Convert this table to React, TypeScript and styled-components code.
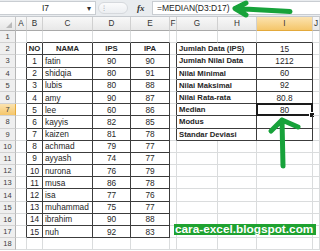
import React from 'react';
import styled, {createGlobalStyle} from 'styled-components';

const GRID = '#dadcdd';
const LINE = '#3c3c3c';

const COLS = ['A', 'B', 'C', 'D', 'E', 'F', 'G', 'H', 'I', 'J'];
const COL_WIDTHS = [16, 11, 16, 50, 38, 39, 7, 41, 39, 56, 7];
const ROWS = 18;

const students: [string, number, number][] = [
  ['fatin', 90, 90],
  ['shidqia', 80, 91],
  ['lubis', 80, 88],
  ['amy', 90, 87],
  ['lee', 60, 86],
  ['kayyis', 82, 85],
  ['kaizen', 81, 78],
  ['achmad', 79, 77],
  ['ayyash', 74, 77],
  ['nurona', 76, 79],
  ['musa', 86, 78],
  ['isa', 77, 76],
  ['muhammad', 75, 77],
  ['ibrahim', 90, 88],
  ['nuh', 92, 83],
];

const stats: [string, string][] = [
  ['Jumlah Data (IPS)', '15'],
  ['Jumlah Nilai Data', '1212'],
  ['Nilai Minimal', '60'],
  ['Nilai Maksimal', '92'],
  ['Nilai Rata-rata', '80.8'],
  ['Median', '80'],
  ['Modus', ''],
  ['Standar Deviasi', ''],
];

const GlobalStyle = createGlobalStyle`
  html, body {
    margin: 0;
    padding: 0;
    background: #ffffff;
  }
  body {
    font-family: "Liberation Sans", Arial, sans-serif;
  }
`;

type CellSpec = {
  text?: string | number;
  right?: string;
  bottom?: string;
  align?: 'left' | 'center';
  bold?: boolean;
  span?: number;
  selected?: boolean;
};

// works out what goes in a sheet cell (row r, column index c: 0 = A)
const specFor = (r: number, c: number): CellSpec | null => {
  const spec: CellSpec = {right: GRID, bottom: GRID, align: 'center'};

  // data table B2:E17
  if (r >= 2 && r <= 17 && c >= 1 && c <= 4) {
    spec.right = LINE;
    spec.bottom = LINE;
    if (r === 2) {
      spec.text = ['NO', 'NAMA', 'IPS', 'IPA'][c - 1];
      spec.bold = true;
    } else {
      const s = students[r - 3];
      spec.text = [r - 2, s[0], s[1], s[2]][c - 1];
      if (c === 2) spec.align = 'left';
    }
  }
  if (c === 0 && r >= 2 && r <= 17) spec.right = LINE;
  if (r === 1 && c >= 1 && c <= 4) spec.bottom = LINE;

  // stats table G2:I9
  if (r >= 2 && r <= 9 && c >= 6 && c <= 8) {
    if (c === 7) return null;
    spec.right = LINE;
    spec.bottom = LINE;
    const s = stats[r - 2];
    if (c === 6) {
      spec.text = s[0];
      spec.bold = true;
      spec.align = 'left';
      spec.span = 2;
    } else {
      spec.text = s[1];
      spec.selected = r === 7;
    }
  }
  if (c === 5 && r >= 2 && r <= 9) spec.right = LINE;
  if (r === 1 && c >= 6 && c <= 8) spec.bottom = LINE;

  return spec;
};

const App = () => {
  const cells: React.ReactNode[] = [];
  for (let r = 1; r <= ROWS; r++) {
    cells.push(
      <RowHead key={`h${r}`} $active={r === 7}>
        {r}
      </RowHead>
    );
    COLS.forEach((_, c) => {
      const s = specFor(r, c);
      if (!s) return;
      cells.push(
        <Cell
          key={`${r}-${c}`}
          $right={s.right}
          $bottom={s.bottom}
          $align={s.align}
          $bold={s.bold}
          $span={s.span}
          $selected={s.selected}
        >
          {s.text}
        </Cell>
      );
    });
  }

  return (
    <Wrapper>
      <GlobalStyle />
      <FormulaBar>
        <NameBox>
          <NameText>I7</NameText>
          <DropArrow>▾</DropArrow>
        </NameBox>
        <Splitter>
          <Pill>⁝</Pill>
          <FxLabel>fx</FxLabel>
        </Splitter>
        <FormulaInput>=MEDIAN(D3:D17)</FormulaInput>
      </FormulaBar>

      <Sheet>
        <Corner>
          <svg width="6" height="6" viewBox="0 0 6 6">
            <polygon points="6,0 6,6 0,6" fill="#b9b9b9" />
          </svg>
        </Corner>
        {COLS.map(col => (
          <ColHead key={col} $active={col === 'I'}>
            {col}
          </ColHead>
        ))}
        {cells}
      </Sheet>

      <LeftArrow width="64" height="18" viewBox="0 0 64 18">
        <path
          d="M14 3 L3 8.5 L14 15 M3 8.5 L58 11.5"
          fill="none"
          stroke="#17a23a"
          strokeWidth="5"
          strokeLinecap="round"
          strokeLinejoin="round"
        />
      </LeftArrow>

      <UpArrow width="38" height="56" viewBox="0 0 38 56">
        <path
          d="M5 15 L16 4 L32 11 M16 4 L17 50"
          fill="none"
          stroke="#17a23a"
          strokeWidth="5"
          strokeLinecap="round"
          strokeLinejoin="round"
        />
      </UpArrow>

      <Watermark>cara-excel.blogspot.com</Watermark>
    </Wrapper>
  );
};

export default App;

const Wrapper = styled.div`
  position: relative;
  width: 320px;
  height: 251px;
  overflow: hidden;
  background: #ffffff;
`;

const FormulaBar = styled.div`
  display: flex;
  align-items: stretch;
  height: 17px;
  box-sizing: border-box;
  background: #e9ecef;
  border-bottom: 1px solid #c5c9ce;
  font-size: 8.5px;
  color: #222;
`;

const NameBox = styled.div`
  width: 96px;
  display: flex;
  align-items: center;
  box-sizing: border-box;
  margin: 1px 0;
  background: #ffffff;
  border: 1px solid #c9cdd2;
  border-left: none;
`;

const NameText = styled.span`
  flex: 1;
  text-align: center;
  padding-left: 4px;
`;

const DropArrow = styled.span`
  width: 8px;
  font-size: 8px;
  color: #333;
`;

const Splitter = styled.div`
  width: 54px;
  display: flex;
  align-items: center;
  padding-left: 2px;
`;

const Pill = styled.div`
  width: 30px;
  height: 12px;
  border-radius: 6px;
  border: 1px solid #d6d9dd;
  background: linear-gradient(#fbfbfc, #eceef1);
  color: #a5aab0;
  font-size: 8px;
  line-height: 12px;
  padding-left: 4px;
  box-sizing: border-box;
`;

const FxLabel = styled.span`
  margin-left: 9px;
  font-family: "Liberation Serif", serif;
  font-style: italic;
  font-weight: bold;
  font-size: 9px;
  color: #333;
`;

const FormulaInput = styled.div`
  flex: 1;
  display: flex;
  align-items: center;
  padding-left: 4px;
  margin: 1px 0;
  background: #ffffff;
  border: 1px solid #c9cdd2;
  border-right: none;
`;

const Sheet = styled.div`
  display: grid;
  grid-template-columns: ${COL_WIDTHS.map(w => `${w}px`).join(' ')};
  grid-template-rows: 14px repeat(${ROWS}, 12.2px);
`;

const Corner = styled.div`
  display: flex;
  align-items: flex-end;
  justify-content: flex-end;
  padding: 0 3px 2px 0;
  background: linear-gradient(#f8f8f8, #e6e6e6);
  border-right: 1px solid #c6c6c6;
  border-bottom: 1px solid #a9a9a9;
`;

const ColHead = styled.div<{$active?: boolean}>`
  display: flex;
  align-items: center;
  justify-content: center;
  box-sizing: border-box;
  font-size: 8.2px;
  color: #333;
  background: ${p =>
    p.$active ? 'linear-gradient(#fbe3b0, #f5c66a)' : 'linear-gradient(#f8f8f8, #e8e8e8)'};
  border-right: 1px solid #d0d0d0;
  border-bottom: 1px solid ${p => (p.$active ? '#e3a93b' : '#a9a9a9')};
`;

const RowHead = styled.div<{$active?: boolean}>`
  display: flex;
  align-items: center;
  justify-content: center;
  box-sizing: border-box;
  font-size: 7.5px;
  color: #3c3c3c;
  background: ${p => (p.$active ? 'linear-gradient(#fbe3b0, #f5c66a)' : '#efefef')};
  border-right: 1px solid ${p => (p.$active ? '#e3a93b' : '#b5b5b5')};
  border-bottom: 1px solid #d2d2d2;
`;

const Cell = styled.div<{
  $right?: string;
  $bottom?: string;
  $align?: 'left' | 'center';
  $bold?: boolean;
  $span?: number;
  $selected?: boolean;
}>`
  position: relative;
  grid-column: span ${p => p.$span || 1};
  display: flex;
  align-items: center;
  justify-content: ${p => (p.$align === 'left' ? 'flex-start' : 'center')};
  padding-left: ${p => (p.$align === 'left' ? '2px' : '0')};
  box-sizing: border-box;
  overflow: visible;
  white-space: nowrap;
  font-size: ${p => (p.$bold ? '7.7px' : '8.3px')};
  font-weight: ${p => (p.$bold ? 'bold' : 'normal')};
  color: #262626;
  border-right: 1px solid ${p => p.$right || GRID};
  border-bottom: 1px solid ${p => p.$bottom || GRID};

  ${p =>
    p.$selected &&
    `
    &::before {
      content: '';
      position: absolute;
      left: -1px;
      top: -1px;
      right: -1px;
      bottom: -1px;
      border: 2px solid #1a1a1a;
    }
    &::after {
      content: '';
      position: absolute;
      right: -3px;
      bottom: -3px;
      width: 4px;
      height: 4px;
      background: #1a1a1a;
      border: 1px solid #ffffff;
    }
  `}
`;

const LeftArrow = styled.svg`
  position: absolute;
  left: 232px;
  top: 0;
`;

const UpArrow = styled.svg`
  position: absolute;
  left: 266px;
  top: 116px;
`;

const Watermark = styled.div`
  position: absolute;
  left: 174px;
  top: 224px;
  height: 11px;
  padding: 0 3px 0 1px;
  box-sizing: border-box;
  background: #1fa230;
  color: #ffffff;
  font-weight: bold;
  font-size: 11.8px;
  line-height: 11px;
  white-space: nowrap;
`;
